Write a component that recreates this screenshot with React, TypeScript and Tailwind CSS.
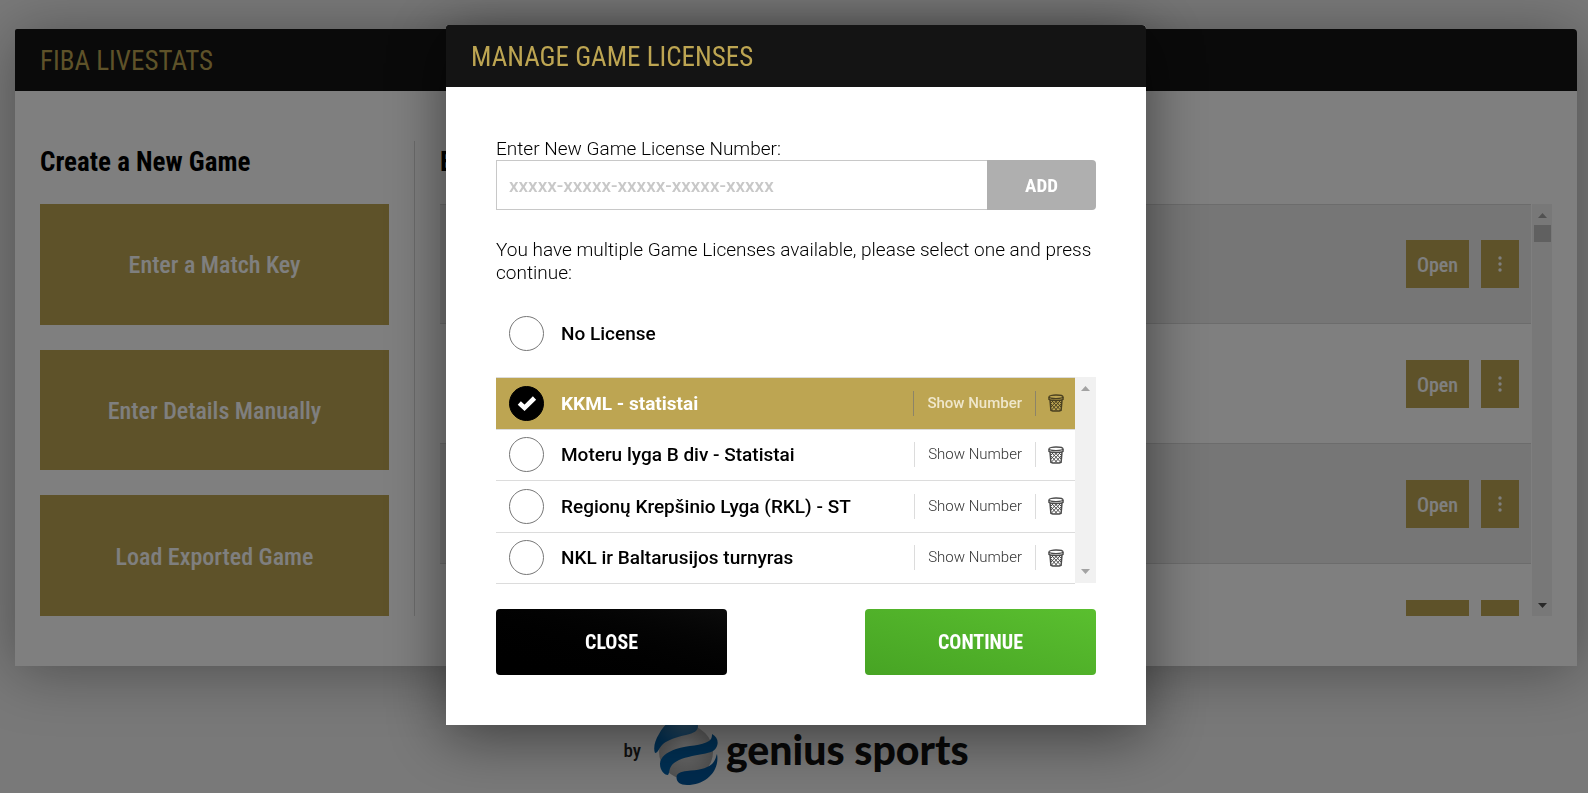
import { useState } from "react";

const condensed = "font-['Roboto_Condensed','Liberation_Sans_Narrow',sans-serif]";

const createActions = ["Enter a Match Key", "Enter Details Manually", "Load Exported Game"];

const existingGames = [1, 2, 3, 4];

const licenses = [
  { id: "kkml", name: "KKML - statistai" },
  { id: "moteru", name: "Moteru lyga B div - Statistai" },
  { id: "rkl", name: "Regionų Krepšinio Lyga (RKL) - ST" },
  { id: "nkl", name: "NKL ir Baltarusijos turnyras" },
];

function BasketIcon() {
  return (
    <svg viewBox="0 0 16 18" className="h-[18px] w-4" fill="none" stroke="currentColor">
      <ellipse cx="8" cy="2.8" rx="7" ry="1.8" strokeWidth="1.3" />
      <path d="M1 3v2.4c2 1.4 12 1.4 14 0V3M2 6l.9 10.300c1.800 1 8.400 1 10.200 0L14 6" strokeWidth="1.5" />
      <path d="M2.500 9.500 9 16.500M3.500 6.500l9 9.500M7 6.500l6 6.500M10.500 6.500l3.500 3.500M13.500 9.500 7 16.500M12.500 6.500l-9 9.500M9 6.500 3 13M5.500 6.500 2 10" strokeWidth="1" />
    </svg>
  );
}

function DotsIcon() {
  return (
    <svg viewBox="0 0 4 16" className="h-4 w-1" fill="currentColor">
      <circle cx="2" cy="2" r="1.7" />
      <circle cx="2" cy="8" r="1.7" />
      <circle cx="2" cy="14" r="1.7" />
    </svg>
  );
}

function Arrow({ down = false }: { down?: boolean }) {
  return (
    <svg viewBox="0 0 9 5" className="h-[5px] w-[9px]" fill="currentColor">
      <path d={down ? "M0 0h9L4.500 5z" : "M0 5h9L4.500 0z"} />
    </svg>
  );
}

function RadioMark({ id, checked, onChange }: { id: string; checked: boolean; onChange: () => void }) {
  return (
    <span className="relative size-[35px] shrink-0">
      <input
        type="radio"
        id={id}
        name="license"
        checked={checked}
        onChange={onChange}
        className="block size-[35px] appearance-none rounded-full border border-[#777] bg-white checked:border-black checked:bg-black"
      />
      {checked && (
        <svg viewBox="0 0 35 35" className="pointer-events-none absolute inset-0 size-[35px]" fill="none" stroke="#fff" strokeWidth="4.6">
          <path d="M10.300 17l5.200 4.800L25.500 12" />
        </svg>
      )}
    </span>
  );
}

function GeniusBall() {
  return (
    <svg viewBox="0 0 64 68" className="h-[68px] w-16">
      <defs>
        <radialGradient id="ball" cx="0.5" cy="0.4" r="0.6">
          <stop offset="0" stopColor="#e4e4e4" />
          <stop offset="1" stopColor="#a2a2a2" />
        </radialGradient>
        <radialGradient id="cap" cx="0.7" cy="0.1" r="0.8">
          <stop offset="0" stopColor="#5f9cc8" />
          <stop offset="1" stopColor="#0060a8" />
        </radialGradient>
      </defs>
      <circle cx="32" cy="35" r="27" fill="url(#ball)" />
      <path d="M1 36C-1 31 1 23 5 17 10 7 19 0 29 0c9 0 15 4 15 9 0 5-4 7-12 9-10 2-18 5-23 9-4 4-5 9-8 9z" fill="url(#cap)" />
      <path d="M58 17c6 3 7 9 4 14-2 4-8 5-16 6.500-11 2-20 4-26 8.500-6 5-4 10-6 12-4 0-8-5-8-11 0-7 7-12 16-15 12-4 26-3 33-8 3-2 3-5 3-7z" fill="#0060a8" />
      <path d="M63 37c3 16-10 31-30 31-7 0-10.500-3-10.500-7.500 0-4 4-6 10.500-6.500 11-1 19-2 25-7 4-4 4-8 5-10z" fill="#00569c" />
    </svg>
  );
}

function GamesPanel() {
  return (
    <main className="rounded-tl-[2px] rounded-tr-[4px] bg-white shadow-[0_5px_60px_rgba(0,0,0,0.35)]">
      <header className="flex h-[62px] items-center rounded-tl-[2px] rounded-tr-[4px] bg-[#141414] px-[25px] pt-[2px]">
        <h1 className={`${condensed} text-[27px] text-[#bda552]`}>FIBA LIVESTATS</h1>
      </header>
      <div className="flex px-[25px] py-[50px]">
        <section className="flex w-[375px] shrink-0 flex-col border-r border-[#d8d8d8] pr-[25px]">
          <h2 className={`${condensed} h-[63px] text-[27px] leading-[42px] font-bold`}>Create a New Game</h2>
          <div className="flex flex-1 flex-col gap-[25px]">
            {createActions.map((action) => (
              <button key={action} type="button" className={`${condensed} flex-1 bg-[#bda552] pt-[2px] text-2xl font-medium text-white`}>
                {action}
              </button>
            ))}
          </div>
        </section>
        <section className="min-w-0 flex-1 pl-[25px]">
          <h2 className={`${condensed} h-[63px] text-[27px] leading-[42px] font-bold`}>Existing Games</h2>
          <div className="flex gap-px">
            <ul className="h-[412px] flex-1 overflow-hidden border-t border-[#d8d8d8]">
              {existingGames.map((game) => (
                <li key={game} className="flex h-[120px] items-center justify-end gap-3 border-b border-[#d8d8d8] px-3 first:h-[119px] odd:bg-[#ededed]">
                  <button type="button" className={`${condensed} h-12 w-[63px] bg-[#bda552] pt-[2px] text-xl font-medium text-white`}>
                    Open
                  </button>
                  <button type="button" aria-label="More" className="flex h-12 w-[38px] items-center justify-center bg-[#bda552] text-white">
                    <DotsIcon />
                  </button>
                </li>
              ))}
            </ul>
            <div className="flex w-5 flex-col items-center bg-[#f1f1f1] pt-[9px] pb-2 text-[#505050]">
              <span className="text-[#a3a3a3]"><Arrow /></span>
              <span className="mt-[7px] h-[17px] w-[17px] bg-[#c1c1c1]" />
              <span className="mt-auto"><Arrow down /></span>
            </div>
          </div>
        </section>
      </div>
    </main>
  );
}

function LicenseModal() {
  const [selected, setSelected] = useState("kkml");
  const [number, setNumber] = useState("");

  return (
    <div
      role="dialog"
      aria-labelledby="license-title"
      className="w-[700px] max-w-full rounded-tl-[2px] rounded-tr-[4px] bg-white shadow-[0_10px_60px_rgba(0,0,0,0.5)]"
    >
      <header className="flex h-[62px] items-center rounded-tl-[2px] rounded-tr-[4px] bg-[#141414] px-[25px] pt-[2px]">
        <h2 id="license-title" className={`${condensed} text-[27px] text-[#bda552]`}>
          MANAGE GAME LICENSES
        </h2>
      </header>
      <form className="p-[50px] text-[19px] leading-[23px]" onSubmit={(e) => e.preventDefault()}>
        <label htmlFor="license-number" className="block font-light">
          Enter New Game License Number:
        </label>
        <div className="flex h-[50px]">
          <input
            id="license-number"
            type="text"
            value={number}
            onChange={(e) => setNumber(e.target.value)}
            placeholder="xxxxx-xxxxx-xxxxx-xxxxx-xxxxx"
            className="min-w-0 flex-1 border border-r-0 border-[#c8c8c8] px-3 font-medium placeholder:text-[#c8c8c8]"
          />
          <button type="button" className={`${condensed} w-[109px] rounded-r-[4px] bg-[#afafaf] font-bold text-white`}>
            ADD
          </button>
        </div>
        <p className="mt-7 font-light">
          You have multiple Game Licenses available, please select one and press continue:
        </p>
        <div className="mt-[32px] flex items-center gap-[17px] px-[13px]">
          <RadioMark id="none" checked={selected === "none"} onChange={() => setSelected("none")} />
          <label htmlFor="none" className="font-medium">No License</label>
        </div>
        <div className="mt-[26px] flex">
          <ul className="flex h-[207px] flex-1 flex-col border-t border-[#dcdcdc]">
            {licenses.map((license) => {
              const active = license.id === selected;
              return (
                <li
                  key={license.id}
                  className={`flex flex-1 items-center border-b border-[#dcdcdc] pr-[11px] pl-[13px] ${active ? "bg-[#bda552]" : ""}`}
                >
                  <RadioMark id={license.id} checked={active} onChange={() => setSelected(license.id)} />
                  <label htmlFor={license.id} className={`flex-1 pl-[17px] ${active ? "font-bold text-white" : "font-medium"}`}>
                    {license.name}
                  </label>
                  <button
                    type="button"
                    className={`h-[25px] border-x px-[13px] text-[15px] ${active ? "border-[#8c8468] font-medium text-[#efe7cb]" : "border-[#dcdcdc] font-light text-[#333]"}`}
                  >
                    Show Number
                  </button>
                  <button type="button" aria-label="Delete" className={`pl-3 ${active ? "text-[#4a4020]" : "text-[#4c4c4c]"}`}>
                    <BasketIcon />
                  </button>
                </li>
              );
            })}
          </ul>
          <div className="mb-px flex w-[21px] flex-col items-center justify-between bg-[#f1f1f1] py-[9px] text-[#a3a3a3]">
            <Arrow />
            <Arrow down />
          </div>
        </div>
        <div className="mt-[25px] flex justify-between">
          <button type="button" className={`${condensed} h-[66px] w-[231px] rounded-[4px] bg-linear-to-tr from-black to-[#0c0c0c] text-xl font-bold text-white`}>
            CLOSE
          </button>
          <button type="submit" className={`${condensed} h-[66px] w-[231px] rounded-[4px] bg-linear-to-tr from-[#47a424] to-[#5abf2f] text-xl font-bold text-white`}>
            CONTINUE
          </button>
        </div>
      </form>
    </div>
  );
}

export default function App() {
  return (
    <div className="min-h-screen overflow-hidden bg-[#f2f2f2] font-[Roboto,sans-serif] text-black">
      <div className="pt-[29px] pr-[11px] pl-[15px]">
        <GamesPanel />
        <footer className="mt-[51px] flex items-center justify-center">
          <span className={`${condensed} text-[19px] font-medium text-[#222]`}>by</span>
          <span className="mr-2 ml-[13px]"><GeniusBall /></span>
          <span className="pb-[2px] font-[Lato,sans-serif] text-[41px] leading-[48px] font-black text-[#111]">genius sports</span>
        </footer>
      </div>
      <div className="fixed inset-0 flex items-start justify-center overflow-hidden bg-black/50 pt-[25px] pl-1">
        <LicenseModal />
      </div>
    </div>
  );
}
